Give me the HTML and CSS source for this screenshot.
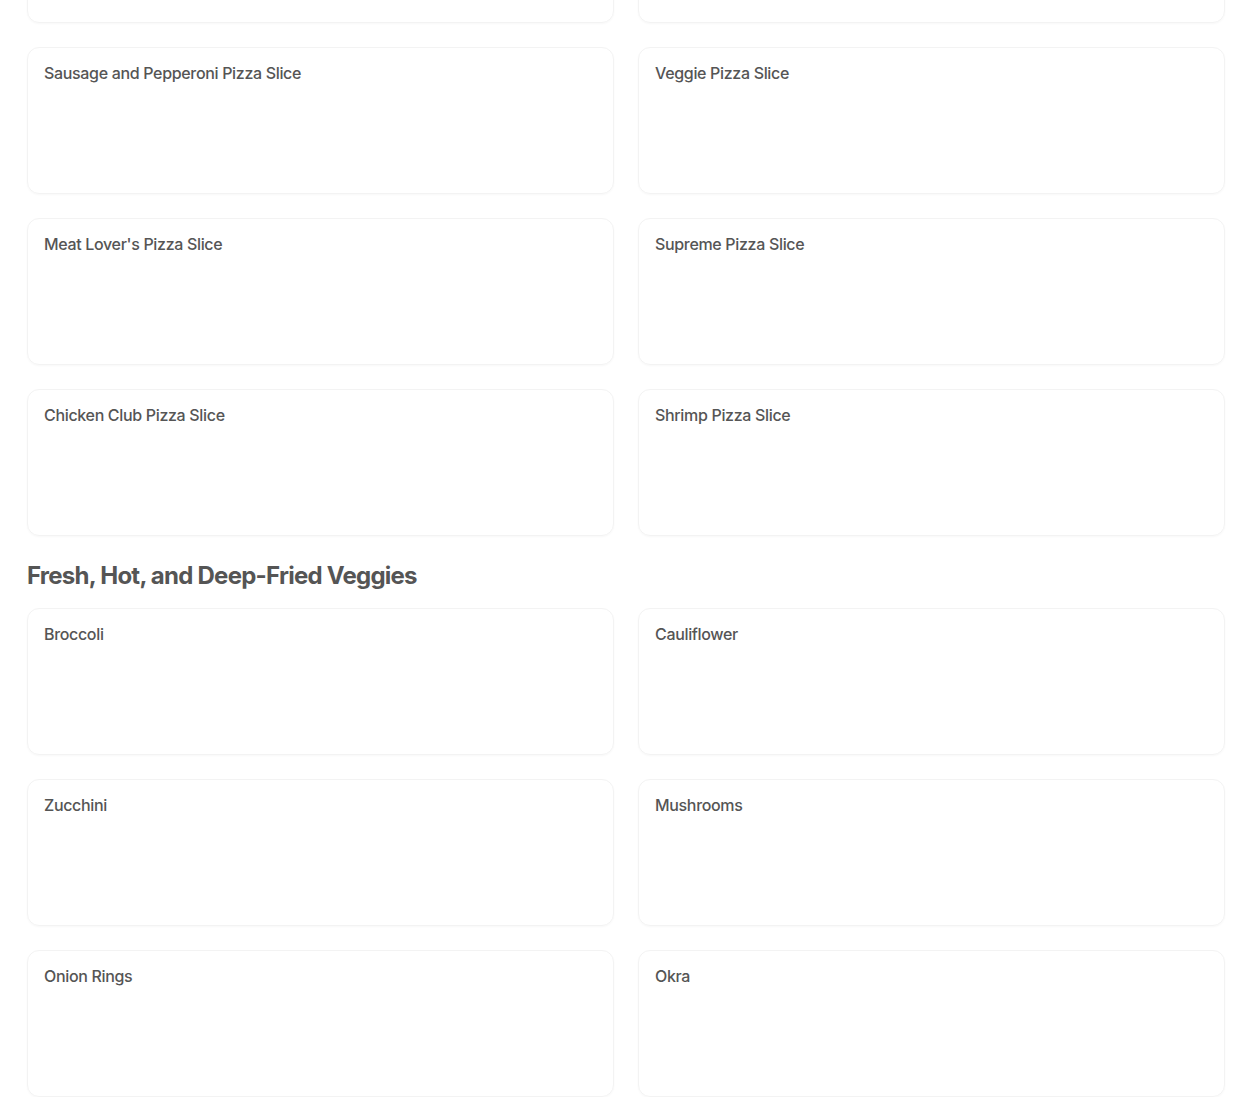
FILE: index.html
```html
<!DOCTYPE html>
<html>
<head>
    <meta name="viewport" content="width=device-width, initial-scale=1.0"/>
    <title>Menu</title>
    <link rel="stylesheet" href="styles.css">
</head>
<body>
    <div class="menu">
        <section class="menu_section first">
            <div class="item_grid">
                <div class="item_card"><p class="item_name">&nbsp;</p></div>
                <div class="item_card"><p class="item_name">&nbsp;</p></div>
                <div class="item_card"><p class="item_name">Sausage and Pepperoni Pizza Slice</p></div>
                <div class="item_card"><p class="item_name">Veggie Pizza Slice</p></div>
                <div class="item_card"><p class="item_name">Meat Lover's Pizza Slice</p></div>
                <div class="item_card"><p class="item_name">Supreme Pizza Slice</p></div>
                <div class="item_card"><p class="item_name">Chicken Club Pizza Slice</p></div>
                <div class="item_card"><p class="item_name">Shrimp Pizza Slice</p></div>
            </div>
        </section>

        <section class="menu_section">
            <h2 class="section_title">Fresh, Hot, and Deep-Fried Veggies</h2>
            <div class="item_grid">
                <div class="item_card"><p class="item_name">Broccoli</p></div>
                <div class="item_card"><p class="item_name">Cauliflower</p></div>
                <div class="item_card"><p class="item_name">Zucchini</p></div>
                <div class="item_card"><p class="item_name">Mushrooms</p></div>
                <div class="item_card"><p class="item_name">Onion Rings</p></div>
                <div class="item_card"><p class="item_name">Okra</p></div>
            </div>
        </section>
    </div>
</body>
</html>
```
FILE: styles.css
```css
body {
    margin: 0;
    background-color: #ffffff;
    font-family: Inter, "Noto Sans", sans-serif;
    color: #555555;
}

.menu {
    padding: 0 25px 0 27px;
}

/* page is scrolled: first card row is cut off at the top */
.menu_section.first {
    margin-top: -124px;
}

.section_title {
    margin: 24px 0 16px 0;
    font-size: 24px;
    line-height: 32px;
    font-weight: 700;
    letter-spacing: -0.75px;
}

.item_grid {
    display: grid;
    grid-template-columns: 1fr 1fr;
    column-gap: 24px;
    row-gap: 24px;
}

.item_card {
    height: 147px;
    box-sizing: border-box;
    padding: 13px 16px;
    border: 1px solid #f3f3f3;
    border-radius: 12px;
    box-shadow: 0 1px 2px rgba(0, 0, 0, 0.03);
}

.item_name {
    margin: 0;
    font-size: 16px;
    line-height: 24px;
    font-weight: 500;
    letter-spacing: -0.33px;
}
```
